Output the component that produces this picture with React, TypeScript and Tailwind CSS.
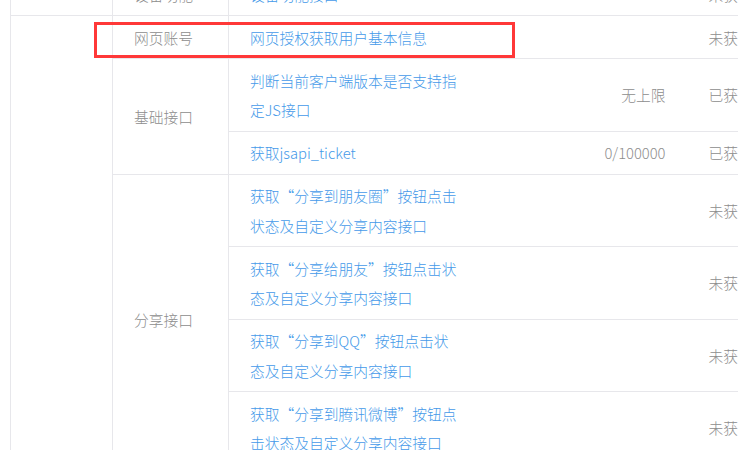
import React from "react";

const grey = "text-[#8d8d8d]";
const blue = "text-[#459ae9]";
const cell =
  "border-b border-[#e7e7eb] align-middle pt-[6.5px] pb-[6px] leading-[29.5px]";

type ShareRow = { lines: string[]; status: string };

const shareRows: ShareRow[] = [
  { lines: ["获取“分享到朋友圈”按钮点击", "状态及自定义分享内容接口"], status: "未获得" },
  { lines: ["获取“分享给朋友”按钮点击状", "态及自定义分享内容接口"], status: "未获得" },
  { lines: ["获取“分享到QQ”按钮点击状", "态及自定义分享内容接口"], status: "未获得" },
  { lines: ["获取“分享到腾讯微博”按钮点", "击状态及自定义分享内容接口"], status: "未获得" },
];

function Lines({ lines }: { lines: string[] }) {
  return (
    <>
      {lines.map((l, i) => (
        <div key={i} className="whitespace-nowrap">
          {l}
        </div>
      ))}
    </>
  );
}

export default function App() {
  return (
    <div
      className="relative w-[738px] h-[450px] overflow-hidden bg-white font-light"
      style={{ fontFamily: '"Noto Sans CJK SC", "Microsoft YaHei", sans-serif' }}
    >
      <div className="pl-[10px] mt-[-27px]">
        <table className="border-collapse table-fixed w-[797px] text-[14.75px]">
          <colgroup>
            <col className="w-[102px]" />
            <col className="w-[116px]" />
            <col className="w-[253px]" />
            <col className="w-[206px]" />
            <col className="w-[120px]" />
          </colgroup>
          <tbody>
            <tr>
              <td className={`${cell} border-l border-r`}></td>
              <td className={`${cell} border-r pl-[21px] ${grey}`}>设备功能</td>
              <td className={`${cell} pl-[21px] ${blue}`}>设备功能接口</td>
              <td className={`${cell} text-right pr-[22px] ${grey}`}></td>
              <td className={`${cell} pl-[21px] ${grey} whitespace-nowrap`}>未获得</td>
            </tr>
            <tr>
              <td rowSpan={8} className={`${cell} border-l border-r`}></td>
              <td className={`${cell} border-r pl-[21px] ${grey}`}>网页账号</td>
              <td className={`${cell} pl-[21px] ${blue} whitespace-nowrap`}>网页授权获取用户基本信息</td>
              <td className={`${cell} text-right pr-[22px] ${grey}`}></td>
              <td className={`${cell} pl-[21px] ${grey} whitespace-nowrap`}>未获得</td>
            </tr>
            <tr>
              <td rowSpan={2} className={`${cell} border-r pl-[21px] ${grey}`}>基础接口</td>
              <td className={`${cell} pl-[21px] ${blue}`}>
                <Lines lines={["判断当前客户端版本是否支持指", "定JS接口"]} />
              </td>
              <td className={`${cell} text-right pr-[22px] ${grey}`}>无上限</td>
              <td className={`${cell} pl-[21px] ${grey} whitespace-nowrap`}>已获得</td>
            </tr>
            <tr>
              <td className={`${cell} pl-[21px] ${blue} whitespace-nowrap`}>获取jsapi_ticket</td>
              <td className={`${cell} text-right pr-[22px] ${grey}`}>0/100000</td>
              <td className={`${cell} pl-[21px] ${grey} whitespace-nowrap`}>已获得</td>
            </tr>
            {shareRows.map((r, i) => (
              <tr key={i}>
                {i === 0 && (
                  <td rowSpan={4} className={`${cell} border-r pl-[21px] ${grey}`}>分享接口</td>
                )}
                <td className={`${cell} pl-[21px] ${blue}`}>
                  <Lines lines={r.lines} />
                </td>
                <td className={`${cell} text-right pr-[22px] ${grey}`}></td>
                <td className={`${cell} pl-[21px] ${grey} whitespace-nowrap`}>{r.status}</td>
              </tr>
            ))}
          </tbody>
        </table>
      </div>
      <div className="absolute left-[94px] top-[22px] w-[421px] h-[36px] border-[3px] border-[#ff3838] pointer-events-none" />
    </div>
  );
}
